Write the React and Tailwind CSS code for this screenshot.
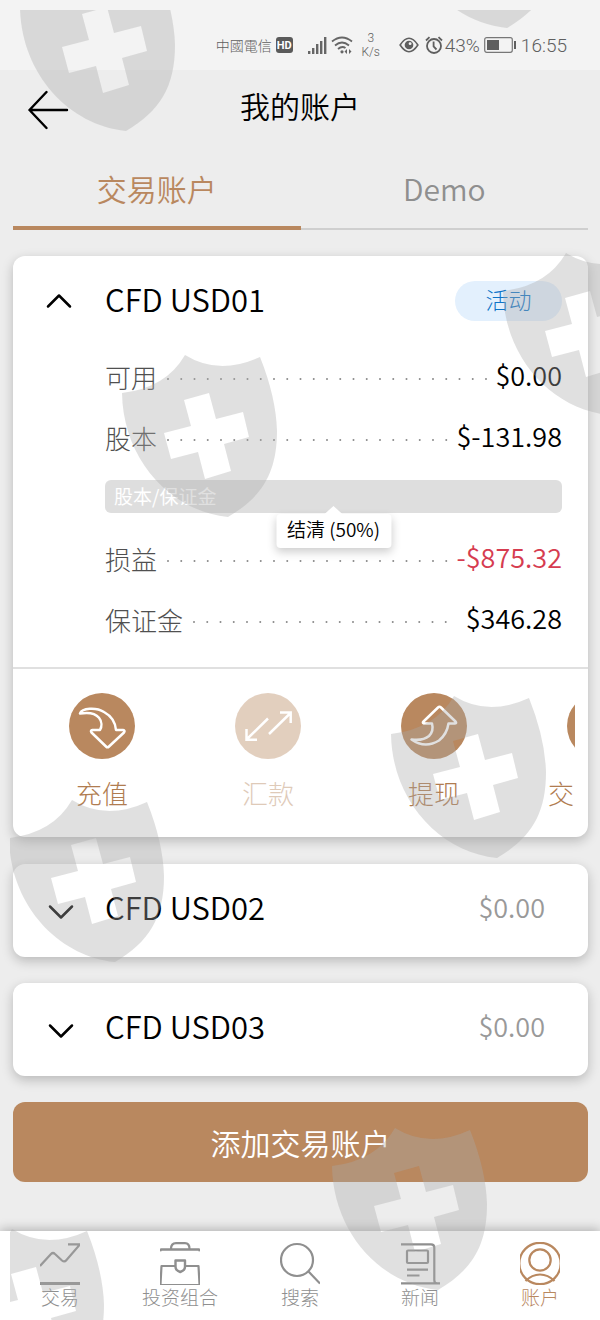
import React, { useState } from 'react';

const SHIELD =
  'M63 -38 Q97 -17 138 -36 Q154 4 155 38 C155 80 140 104 106 124 C48 118 1 66 0 0 Q44 -5 63 -38 Z ' +
  'M62 7 L87 0 L94 26 L121 19 L127 44 L102 51 L109 78 L83 86 L76 59 L49 66 L42 40 L69 33 Z';

const SHIELD_SPOTS = [
  [20, 7],
  [401, -96],
  [122, 393],
  [503, 291],
  [391, 734],
  [9, 838],
  [332, 1166],
  [-51, 1267],
];

function Watermark() {
  return (
    <svg
      className="pointer-events-none absolute left-0 top-0 z-20"
      width="600"
      height="1320"
      viewBox="0 0 600 1320"
      aria-hidden="true"
    >
      <clipPath id="mark-area">
        <rect x="10" y="10" width="590" height="1310" />
      </clipPath>
      <g clipPath="url(#mark-area)" fill="#a9a9a9" fillOpacity="0.36" fillRule="evenodd">
        {SHIELD_SPOTS.map(([x, y]) => (
          <path key={`${x}-${y}`} d={SHIELD} transform={`translate(${x} ${y})`} />
        ))}
      </g>
    </svg>
  );
}

function StatusBar() {
  return (
    <div className="flex h-[70px] items-center justify-end bg-[#f3f3f3] pr-[33px] pt-5 font-[Roboto,sans-serif] text-[19px] leading-none text-[#5f5f5f]">
      <span className="font-['Noto_Sans_CJK_TC',sans-serif] text-[14px] font-light">中國電信</span>
      <span className="ml-1 flex h-4 w-[17px] items-center justify-center rounded-[3px] bg-[#5a5a5a] text-[11px] font-bold text-white">
        HD
      </span>
      <svg className="ml-[14px]" width="20" height="18" viewBox="0 0 20 18" fill="#666" aria-hidden="true">
        <rect x="1" y="15" width="2.400" height="3" />
        <rect x="5" y="12" width="2.400" height="6" />
        <rect x="9" y="8" width="2.400" height="10" />
        <rect x="13" y="5" width="2.400" height="13" />
        <rect x="17" y="1" width="2.400" height="17" />
      </svg>
      <svg className="ml-1" width="22" height="18" viewBox="0 0 22 18" fill="none" stroke="#666" strokeWidth="1.8" aria-hidden="true">
        <path d="M1 5.5Q11 -2.5 21 5.5" />
        <path d="M4 9.5Q11 3.5 18 9.5" />
        <path d="M7 13Q11 9.5 14.5 12" />
        <circle cx="11" cy="15.8" r="1.6" fill="#666" stroke="none" />
        <path d="M16 13v5l-2.5-2.5zM18 13v5l2.5-2.5z" fill="#666" stroke="none" />
      </svg>
      <span className="ml-2 w-5 text-center text-[12px] leading-[14px]">
        3<br />
        K/s
      </span>
      <svg className="ml-[18px]" width="20" height="16" viewBox="0 0 18 14" fill="none" stroke="#5f5f5f" strokeWidth="1.4" aria-hidden="true">
        <path d="M1 7Q9 -5 17 7Q9 19 1 7Z" />
        <circle cx="9" cy="7" r="3.9" fill="#5f5f5f" stroke="none" />
        <circle cx="10" cy="5.8" r="1.3" fill="#f3f3f3" stroke="none" />
      </svg>
      <svg className="ml-[6px]" width="18" height="18" viewBox="0 0 18 18" fill="none" stroke="#5f5f5f" strokeWidth="1.8" aria-hidden="true">
        <circle cx="9" cy="10" r="7" />
        <path d="M8.6 5.5V10.5L11.5 13.5" />
        <path d="M1 4.5L4.5 1.2M17 4.5L13.5 1.2" />
      </svg>
      <span className="ml-[2px]">43%</span>
      <svg className="ml-1" width="32" height="16" viewBox="0 0 32 16" aria-hidden="true">
        <rect x="0.7" y="0.7" width="27.6" height="14.6" rx="2" fill="none" stroke="#777" strokeWidth="1.2" />
        <rect x="3" y="3" width="12" height="10" fill="#5f5f5f" />
        <rect x="30" y="4" width="2" height="8" fill="#5f5f5f" />
      </svg>
      <span className="ml-[5px]">16:55</span>
    </div>
  );
}

function Chevron({ up }) {
  return (
    <svg width="28" height="16" viewBox="0 0 28 16" fill="none" stroke="#000" strokeWidth="2.5" strokeLinecap="round" strokeLinejoin="round" aria-hidden="true">
      <path d={up ? 'M3 13.5L14 2.500L25 13.500' : 'M3 2.500L14 13.500L25 2.500'} />
    </svg>
  );
}

function Row({ label, value, negative }) {
  return (
    <div className="flex h-[61px] items-center">
      <dt className="text-[26px] font-light text-[#505050]">{label}</dt>
      <svg className="ml-[10px] mr-2 mt-1 h-[2px] min-w-0 flex-1" aria-hidden="true">
        <line x1="1" y1="1" x2="100%" y2="1" stroke="#8a8a8a" strokeWidth="2" strokeLinecap="round" strokeDasharray="0 13.25" />
      </svg>
      <dd className={`pb-[2px] text-[27px] ${negative ? 'text-[#d63c50]' : 'text-black'}`}>{value}</dd>
    </div>
  );
}

function ActionIcon({ name }) {
  return (
    <svg width="66" height="66" viewBox="0 0 66 66" fill="none" stroke="#fff" strokeWidth="2.5" strokeLinejoin="round" aria-hidden="true">
      {name === 'deposit' && (
        <path d="M11 20.500C13 15 27 14 35 19Q46 25 47 37H54Q56.500 37.500 55 39.500L40 53.500Q38.500 55 37 53.500L22.500 39.500Q21 37.500 23.500 37H31C35 30 31 17 11 20.500Z" />
      )}
      {name === 'transfer' && (
        <path strokeLinejoin="miter" d="M33 25.500L11.500 46.500M11.500 36V46.700H22M34 41L55.500 20M45 19.500H55.700V30" />
      )}
      {name === 'withdraw' && (
        <path d="M10.500 46.500Q22 48 28 43Q33 38 31 30.500H23Q21 30 22.500 28.500L37 14.500Q38.500 13 40 14.500L54.500 28.500Q56 30.500 54 30.500H47.500Q46 41 38 47.500Q24 56 10.500 46.500Z" />
      )}
      {name === 'history' && <path d="M20 20H46V46H20ZM26 28H40M26 36H40" />}
    </svg>
  );
}

const ACTIONS = [
  { name: 'deposit', label: '充值' },
  { name: 'transfer', label: '汇款', disabled: true },
  { name: 'withdraw', label: '提现' },
  { name: 'history', label: '交易记录' },
];

function NavIcon({ name }) {
  return (
    <svg width="40" height="43" viewBox="0 0 40 43" fill="none" stroke="currentColor" strokeWidth="2.200" strokeLinejoin="round" aria-hidden="true">
      {name === 'trade' && (
        <>
          <path d="M0 24L11 12Q13 10 15 12L22 18.500Q24.500 20.500 26.500 18L39.500 3M28 2.300H40" />
          <path d="M0 41.500H40" strokeWidth="3" />
        </>
      )}
      {name === 'portfolio' && (
        <>
          <path d="M11 7C11 3 13 1.200 16 1.200H25C28 1.200 29.500 3 29.500 7" />
          <path d="M0 9L1 7.500H39L40 9" strokeWidth="2.4" />
          <path d="M15 24H1.500L0.500 42M25.500 24H38.500L39.500 42" />
          <path d="M0 42.500H40" strokeWidth="1" />
          <path d="M15.500 18.500H25V24.500Q25 28.500 20.200 30Q15.500 28.500 15.500 24.500Z" strokeWidth="2.400" />
        </>
      )}
      {name === 'search' && (
        <>
          <circle cx="17" cy="18" r="16" />
          <path d="M28.500 29.500L40 41.500" />
        </>
      )}
      {name === 'news' && (
        <>
          <path d="M1 2.300H31Q34.300 2.300 34.300 5.500V38Q34.300 41.300 37 41.300M1 41.300H40" />
          <rect x="7" y="8.500" width="21" height="12.500" rx="1" />
          <path d="M7 27.700H28M7 33.500H19.500" />
        </>
      )}
      {name === 'account' && (
        <>
          <circle cx="20" cy="21.500" r="20.700" />
          <circle cx="20" cy="18" r="10.700" />
          <path d="M5.500 39Q12 32.500 20 32.500Q28 32.500 34.500 39" />
        </>
      )}
    </svg>
  );
}

const NAV = [
  { name: 'trade', label: '交易' },
  { name: 'portfolio', label: '投资组合' },
  { name: 'search', label: '搜索' },
  { name: 'news', label: '新闻' },
  { name: 'account', label: '账户', active: true },
];

const CARD = 'rounded-xl bg-white shadow-[0_4px_12px_rgba(0,0,0,0.22)]';

function ClosedAccount({ name, value }) {
  return (
    <section className={CARD}>
      <button type="button" aria-expanded="false" className="flex h-[93px] w-full items-center pb-[6px] pl-[34px] pr-[43px]">
        <span className="mt-2">
          <Chevron />
        </span>
        <span className="ml-[30px] text-[31px] text-black">{name}</span>
        <span className="ml-auto text-[27px] text-[#999]">{value}</span>
      </button>
    </section>
  );
}

export default function App() {
  const [tab, setTab] = useState('live');
  const tabClass = (on) =>
    on
      ? 'flex-1 border-b-4 border-[#b9885f] pb-[2px] text-[#b9885f]'
      : 'flex-1 border-b-2 border-[#cfcfcf] pb-1 text-[#8f8f8f]';
  return (
    <div className="relative flex min-h-screen flex-col overflow-hidden bg-[#ededed] font-['Noto_Sans_CJK_SC',sans-serif] font-[350]">
      <StatusBar />
      <header className="grid h-[74px] grid-cols-[1fr_auto_1fr] items-center px-7">
        <button type="button" aria-label="返回" className="mt-[6px] justify-self-start">
          <svg width="42" height="40" viewBox="0 0 42 40" fill="none" stroke="#000" strokeWidth="2.4" strokeLinecap="round" strokeLinejoin="round" aria-hidden="true">
            <path d="M39 20H1.500M18.500 2L1.500 20L18.500 38" />
          </svg>
        </button>
        <h1 className="pb-1 text-[30px] font-[350] text-black">我的账户</h1>
      </header>

      <main className="flex flex-1 flex-col pb-11 pl-[13px] pr-3 pt-2">
        <div role="tablist" className="flex h-[78px] items-end text-[30px]">
          <button type="button" role="tab" aria-selected={tab === 'live'} onClick={() => setTab('live')} className={`h-full ${tabClass(tab === 'live')}`}>
            交易账户
          </button>
          <button type="button" role="tab" aria-selected={tab === 'demo'} onClick={() => setTab('demo')} className={`h-full ${tabClass(tab === 'demo')}`}>
            Demo
          </button>
        </div>

        <section className={`mt-[26px] ${CARD}`}>
          <div className="flex h-[90px] items-center pl-8 pr-[26px]">
            <button type="button" aria-label="收起" aria-expanded="true">
              <Chevron up />
            </button>
            <h2 className="ml-8 pb-1 text-[31px] font-[350] text-black">CFD USD01</h2>
            <span className="ml-auto flex h-10 w-[107px] items-center justify-center rounded-full bg-[#e3f0fd] pb-1 text-[23px] font-light text-[#0d74c8]">
              活动
            </span>
          </div>

          <dl className="pb-[17px] pl-[92px] pr-[26px]">
            <Row label="可用" value="$0.00" />
            <Row label="股本" value="$-131.98" />
            <div className="relative mb-[15px] mt-3 flex h-[33px] items-center rounded-md bg-[#dedede] px-[9px] text-[19px] text-white">
              <dt className="font-normal">股本/保证金</dt>
              <dd className="absolute left-1/2 top-[34px] z-10 flex h-[34px] -translate-x-1/2 items-center whitespace-nowrap rounded-sm bg-white px-[11px] pb-1 text-[19px] text-black shadow-[0_4px_10px_rgba(0,0,0,0.2)]">
                <svg className="absolute -top-2 left-1/2 -translate-x-1/2" width="20" height="9" viewBox="0 0 20 9" fill="#fff" aria-hidden="true">
                  <path d="M0 9L10 0L20 9Z" />
                </svg>
                结清 (50%)
              </dd>
            </div>
            <Row label="损益" value="-$875.32" negative />
            <Row label="保证金" value="$346.28" />
          </dl>

          <div className="border-t-2 border-[#e0e0e0] px-[13px] pb-6 pt-6">
            <div className="flex gap-[14px] overflow-x-auto [scrollbar-width:none]">
              {ACTIONS.map((a) => (
                <button
                  key={a.name}
                  type="button"
                  disabled={a.disabled}
                  className="flex w-[152px] shrink-0 flex-col items-center text-[26px] font-light text-[#b07c50] disabled:opacity-40"
                >
                  <span className="rounded-full bg-[#b9885f]">
                    <ActionIcon name={a.name} />
                  </span>
                  <span className="mt-[14px] leading-10">{a.label}</span>
                </button>
              ))}
            </div>
          </div>
        </section>

        <div className="mt-[27px] flex flex-col gap-[26px]">
          <ClosedAccount name="CFD USD02" value="$0.00" />
          <ClosedAccount name="CFD USD03" value="$0.00" />
          <button type="button" className="h-20 rounded-xl bg-[#b9885f] text-[30px] text-white">
            添加交易账户
          </button>
        </div>
      </main>

      <nav className="grid h-[89px] grid-cols-5 bg-white shadow-[0_-2px_10px_rgba(0,0,0,0.25)]">
        {NAV.map((n) => (
          <a
            key={n.name}
            href={`#${n.name}`}
            aria-current={n.active ? 'page' : undefined}
            className={`flex flex-col items-center pt-[11px] ${n.active ? 'text-[#b9885f]' : 'text-[#8f8f8f]'}`}
          >
            <NavIcon name={n.name} />
            <span className="text-[19px] font-light leading-6">{n.label}</span>
          </a>
        ))}
      </nav>

      <Watermark />
    </div>
  );
}
